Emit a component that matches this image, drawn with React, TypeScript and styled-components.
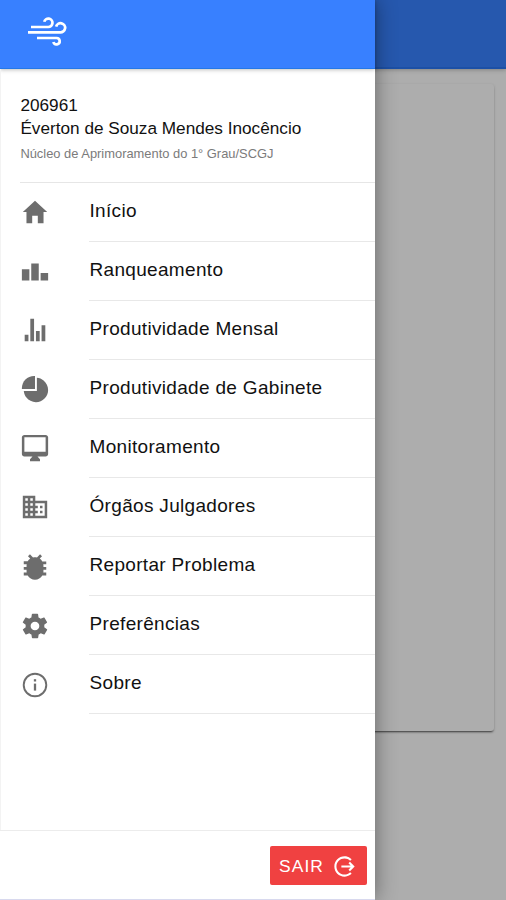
import React from 'react';
import styled, { createGlobalStyle } from 'styled-components';
import type { IconType } from 'react-icons';
import {
  IoMdHome,
  IoMdPodium,
  IoMdStats,
  IoMdPie,
  IoMdDesktop,
  IoMdBusiness,
  IoMdBug,
  IoMdSettings,
  IoMdLogOut,
} from 'react-icons/io';

const GlobalStyle = createGlobalStyle`
  * { box-sizing: border-box; }
  body {
    margin: 0;
    background: #adadad;
    font-family: "Liberation Sans", Arial, sans-serif;
  }
`;

const Screen = styled.div`
  position: relative;
  width: 506px;
  height: 900px;
  overflow: hidden;
  background: #adadad;
`;

const PageBar = styled.div`
  height: 69px;
  background: #2658ae;
  border-bottom: 2px solid #1c50a6;
  box-shadow: 0 1px 4px rgba(0, 0, 0, 0.25);
`;

const PageCard = styled.div`
  height: 647px;
  margin: 15px 12px 0;
  border-radius: 3px;
  background: #adadad;
  box-shadow: 0 2px 2px -1px rgba(0, 0, 0, 0.6), 0 1px 3px rgba(0, 0, 0, 0.16);
`;

const Drawer = styled.aside`
  position: absolute;
  inset: 0 auto 0 0;
  width: 375px;
  display: flex;
  flex-direction: column;
  background: #fff;
  box-shadow: 0 0 20px rgba(0, 0, 0, 0.42);
`;

const DrawerBar = styled.header`
  flex: none;
  height: 69px;
  padding: 16px 0 0 26px;
  background: #3880ff;
  border-bottom: 1px solid #2478e8;
  box-shadow: 0 1px 4px rgba(0, 0, 0, 0.25);
`;

const Body = styled.div`
  flex: 1;
  border-left: 1px solid #f3f3f3;
`;

const Profile = styled.section`
  height: 113.5px;
  margin-left: 19px;
  padding-top: 25px;
  border-bottom: 1.5px solid #e6e6e6;
`;

const ProfileLine = styled.div`
  height: 23px;
  padding-left: 0.4px;
  font-size: 17.2px;
  line-height: 22px;
  color: #111;
  white-space: nowrap;
`;

const Department = styled.div`
  margin-top: 5px;
  padding-left: 0.4px;
  font-size: 12.9px;
  line-height: 18px;
  color: #7b7b7b;
  white-space: nowrap;
`;

const MenuRow = styled.div`
  display: flex;
  height: 59.1px;
  padding-left: 19px;
`;

const IconBox = styled.span`
  display: flex;
  flex: none;
  width: 69px;
  padding-top: 14.5px;
  color: #6d6d6d;
`;

const Label = styled.span`
  flex: 1;
  padding: 16px 0 0 0.5px;
  border-bottom: 1.5px solid #e8e8e8;
  font-size: 19px;
  line-height: 24px;
  letter-spacing: 0.32px;
  color: #111;
  white-space: nowrap;
`;

const Footer = styled.footer`
  display: flex;
  flex: none;
  justify-content: flex-end;
  height: 70px;
  padding: 15px 8px 0 0;
  border-top: 1px solid #ececec;
  border-bottom: 1px solid #d8d9ee;
`;

const ExitButton = styled.button`
  display: flex;
  align-items: center;
  justify-content: space-between;
  width: 97px;
  height: 39px;
  padding: 1px 10px 0 9px;
  border: 0;
  border-radius: 2px;
  background: #f04141;
  color: #fff;
  font: 17.4px "Liberation Sans", Arial, sans-serif;
  letter-spacing: 1.1px;
`;

const WindLogo = () => (
  <svg width="42" height="32" viewBox="26 16 42 32" fill="none" stroke="#fff" strokeWidth="2.7">
    <path d="M31 27H48.2A4.2 4.2 0 1 0 44.2 21.8" />
    <path d="M28 32.4H60A4.6 4.6 0 1 0 56.1 26.6" />
    <path d="M37 38H56.4A3.2 3.2 0 1 1 53.4 42" />
  </svg>
);

const InfoIcon: IconType = () => (
  <svg width="30" height="30" viewBox="0 0 30 30" fill="none" stroke="currentColor" strokeWidth="1.9">
    <circle cx="15" cy="15" r="11.3" />
    <path d="M15 13.6V20.6" strokeWidth="2.3" />
    <path d="M15 9.2V11.5" strokeWidth="2.3" />
  </svg>
);

const menu: { label: string; Icon: IconType }[] = [
  { label: 'Início', Icon: IoMdHome },
  { label: 'Ranqueamento', Icon: IoMdPodium },
  { label: 'Produtividade Mensal', Icon: IoMdStats },
  { label: 'Produtividade de Gabinete', Icon: IoMdPie },
  { label: 'Monitoramento', Icon: IoMdDesktop },
  { label: 'Órgãos Julgadores', Icon: IoMdBusiness },
  { label: 'Reportar Problema', Icon: IoMdBug },
  { label: 'Preferências', Icon: IoMdSettings },
  { label: 'Sobre', Icon: InfoIcon },
];

export default function App() {
  return (
    <>
      <GlobalStyle />
      <Screen>
        <PageBar />
        <PageCard />
        <Drawer>
          <DrawerBar>
            <WindLogo />
          </DrawerBar>
          <Body>
            <Profile>
              <ProfileLine>206961</ProfileLine>
              <ProfileLine>Éverton de Souza Mendes Inocêncio</ProfileLine>
              <Department>Núcleo de Aprimoramento do 1° Grau/SCGJ</Department>
            </Profile>
            <nav>
              {menu.map(({ label, Icon }) => (
                <MenuRow key={label}>
                  <IconBox>
                    <Icon size={30} />
                  </IconBox>
                  <Label>{label}</Label>
                </MenuRow>
              ))}
            </nav>
          </Body>
          <Footer>
            <ExitButton>
              SAIR
              <IoMdLogOut size={25} />
            </ExitButton>
          </Footer>
        </Drawer>
      </Screen>
    </>
  );
}
